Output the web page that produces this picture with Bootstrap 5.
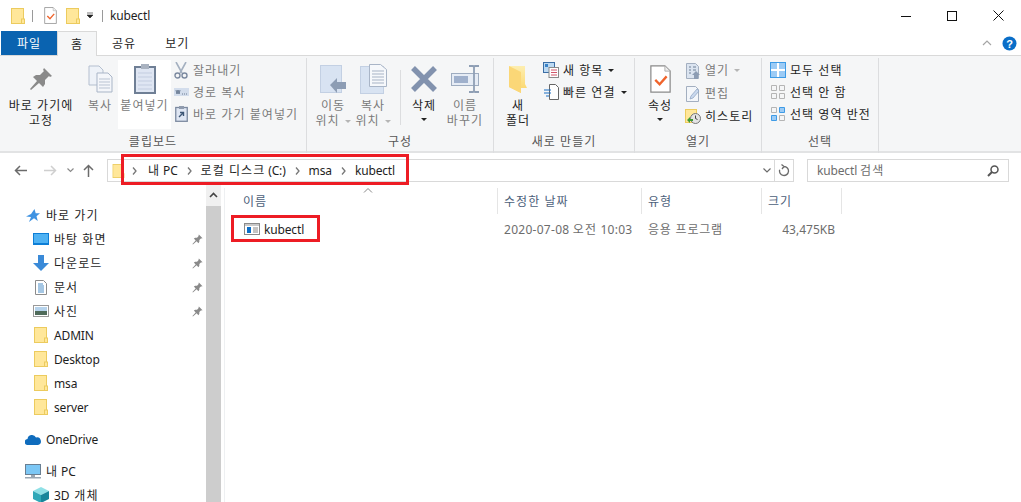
<!DOCTYPE html>
<html lang="ko"><head><meta charset="utf-8"><title>kubectl</title>
<link href="https://cdn.jsdelivr.net/npm/bootstrap@5.3.0/dist/css/bootstrap.min.css" rel="stylesheet">
<style>
html,body{height:502px;overflow:hidden;background:#fff}
body{position:relative;font-family:"Noto Sans","Noto Sans CJK KR",sans-serif;font-size:12px;line-height:15px;color:#1e1e1e;letter-spacing:-.15px}
svg{display:block;flex:none}
.ko{letter-spacing:1.05px}
.wpx-12{width:12px}.wpx-36{width:36px}.wpx-38{width:38px}.wpx-40{width:40px}.wpx-42{width:42px}.wpx-46{width:46px}.wpx-53{width:53px}.wpx-82{width:82px}.wpx-7{width:7px}.wpx-6{width:6px}
.wpx-307{width:307px}.wpx-187{width:187px}.wpx-141{width:141px}.wpx-127{width:127px}.wpx-117{width:117px}
.mln-2{margin-left:-2px}.mlp-6{margin-left:6px}.mlp-7{margin-left:7px}.mlp-8{margin-left:8px}.mlp-9{margin-left:9px}.mlp-10{margin-left:10px}.mlp-11{margin-left:11px}.mlp-14{margin-left:14px}.mlp-15{margin-left:15px}.mlp-17{margin-left:17px}.mlp-1{margin-left:1px}.mlp-2{margin-left:2px}.mlp-4{margin-left:4px}.mlp-29{margin-left:29px}
.titlebar{height:31px;padding-left:11px}
.tsep{width:1px;height:12px;background:#9a9a9a}
.winctl{width:46px;height:31px}
.tabrow{height:24px}
.tabfile{width:56px;height:24px;margin-left:1px;background:#0a63b0;color:#fff}
.tabhome{width:40px;height:25px;background:#f5f6f7;border:1px solid #d9d9d9;border-bottom:0;position:relative;z-index:1}
.tabplain{height:24px}
.rhelp{margin:0 4px 0 10px}
.ribbon{height:98px;background:#f5f6f7;border-top:1px solid #d9d9d9;border-bottom:2px solid #e2e3e4}
.rgroup{height:95px;border-right:1px solid #dcdddf;margin-top:2px;flex:none}
.rbody{height:74px;padding-top:2px}
.rlabel{height:15px;margin-top:2px;color:#555;text-align:center}
.bigbtn{height:69px;flex:none;text-align:center;white-space:nowrap}
.bigbtn .ico{height:38px}
.dis{color:#7a7a7a}
.smallcol{margin-top:-1px}
.smallrow{height:22px;white-space:nowrap}
.tallrows .smallrow{height:23px}
.smallrow .sico{width:18px;height:18px;margin-right:3px}
.sel-ico{margin-right:4px}
.selcol{padding-left:8px}
.pastebox{background:#fff}
.caretd{display:block;width:0;margin:5px auto 0;border-left:3px solid transparent;border-right:3px solid transparent;border-top:3px solid #222}
.caretin{display:inline-block;width:0;border-left:3px solid transparent;border-right:3px solid transparent;border-top:3px solid #222;vertical-align:middle;margin-left:5px}
.caretg{border-top-color:#b5b5b5}
.rsep{width:1px;height:55px;background:#dcdddf;margin-top:10px;margin-left:6px;flex:none}
.addrrow{height:30px;padding-top:6px}
.addrbox{height:23px;border:1px solid #d9d9d9;width:687px}
.navbtns{width:107px;height:23px}
.crumb{margin:0 9px}
.crumb1{margin-left:7px;margin-right:11px}
.addrdiv{width:1px;height:21px;background:#d9d9d9;margin:0 3px}
.refresh{margin-right:3px}
.searchbox{height:23px;width:202px;border:1px solid #d9d9d9;margin-left:13px;padding:0 9px;color:#6d6d6d}
.contentrow{height:320px}
.navpane{width:206px;padding-top:20px;flex:none}
.navrow{height:24px;white-space:nowrap}
.nico{width:18px;height:18px;margin-left:32px;margin-right:4px;flex:none}
.nico2{width:18px;height:18px;margin-left:24px;margin-right:4px;flex:none}
.navpin{margin-right:3px}
.navgap{height:8px}
.scrolltrack{width:15px;background:#cdcdcd;flex:none}
.scrolltop{height:23px;background:#f0f0f0}
.mainpane{margin-left:3px;border-left:1px solid #eef0f2;position:relative;flex:1;margin-top:5px}
.headrow{height:26px;color:#4c607a}
.hcell{height:26px;border-right:1px solid #e5e5e5;padding-left:6px;flex:none}
.cname{width:273px;padding-left:18px}.cdate{width:144px}.ctype{width:120px}.csize{width:80px}
.filerow{height:24px;margin-top:3px;color:#6d6d6d}
.filecell{flex:none;padding-left:6px}
.fname{width:273px;padding-left:19px;color:#1e1e1e}
.fico{margin-right:4px}
.fdate{letter-spacing:.28px}
.ftype{letter-spacing:.8px}
.fsize{width:73px;letter-spacing:0}
.redbox{position:absolute;border:3px solid #ed1c24;pointer-events:none}
.rb-addr{left:121px;top:154px;width:288px;height:31px}
.rb-file{left:231px;top:215px;width:89px;height:27px}
.sortcaret{position:absolute;left:138px;top:0}
</style></head><body>
<svg width="0" height="0" class="position-absolute">
<defs><linearGradient id="fg" x1="0" y1="0" x2="0" y2="1"><stop offset="0" stop-color="#fdeeb0"/><stop offset="1" stop-color="#fbd568"/></linearGradient></defs>
<symbol id="fld" viewBox="0 0 14 16"><rect x=".5" y=".5" width="12" height="15" fill="#ffe79a" stroke="#eccb5e"/><rect x="10.5" y="11" width="3" height="4.5" fill="#ffe79a" stroke="#eccb5e"/></symbol>
<symbol id="pin" viewBox="0 0 24 24"><path d="M15 1l8 8-2 1-1-1-4 4v4l-2 3-4-4-8 7-1-1 7-8-4-4 3-2h4l4-4-1-1z" fill="#8a8a8a"/></symbol>
<symbol id="doccheck" viewBox="0 0 24 32"><path d="M1 1h16l6 6v24H1z" fill="#fff" stroke="#8a8a8a" stroke-width="1.4"/><path d="M17 1v6h6" fill="#eee" stroke="#aaa"/><path d="M6 17l5 5 8-9" fill="none" stroke="#f0642c" stroke-width="2.6"/></symbol>
<symbol id="ckgrid" viewBox="0 0 16 16"><rect x=".5" y=".5" width="15" height="15" fill="#fff" stroke="#3e9be6"/><path d="M1 1h6v6H1zM9 1h6v6H9zM1 9h6v6H1zM9 9h6v6H9z" fill="#9ccbf5"/></symbol>
</svg>

<div class="titlebar d-flex align-items-center">
 <svg width="14" height="16"><use href="#fld"/></svg>
 <span class="tsep mlp-7"></span>
 <svg class="mlp-11" width="13" height="17"><use href="#doccheck"/></svg>
 <svg class="mlp-9" width="14" height="16"><use href="#fld"/></svg>
 <svg class="mlp-6" width="8" height="7" viewBox="0 0 8 7"><path d="M1 1h6M1 3h6l-3 3z" fill="#222" stroke="#222" stroke-width=".6"/></svg>
 <span class="tsep mlp-8"></span>
 <span class="mlp-7">kubectl</span>
 <div class="ms-auto d-flex">
  <div class="winctl d-flex align-items-center justify-content-center"><svg width="10" height="10"><path d="M0 5.500h10" stroke="#111"/></svg></div>
  <div class="winctl d-flex align-items-center justify-content-center"><svg width="10" height="10"><rect x=".5" y=".5" width="9" height="9" fill="none" stroke="#111"/></svg></div>
  <div class="winctl d-flex align-items-center justify-content-center"><svg width="11" height="11"><path d="M.5.500l10 10M10.500.500l-10 10" stroke="#111"/></svg></div>
 </div>
</div>

<div class="tabrow d-flex align-items-start">
 <div class="tabfile ko d-flex align-items-center justify-content-center">파일</div>
 <div class="tabhome ko d-flex align-items-center justify-content-center">홈</div>
 <div class="tabplain ko d-flex align-items-center mlp-15">공유</div>
 <div class="tabplain ko d-flex align-items-center mlp-29">보기</div>
 <div class="ms-auto d-flex align-items-center tabplain">
  <svg width="10" height="6"><path d="M1 5l4-4 4 4" fill="none" stroke="#a5a5a5" stroke-width="1.2"/></svg>
  <svg class="rhelp" width="15" height="15"><circle cx="7.5" cy="7.5" r="7" fill="#0a6ec8"/><text x="7.5" y="11.5" text-anchor="middle" font-size="11" font-weight="700" fill="#fff" font-family="Liberation Sans">?</text></svg>
 </div>
</div>

<div class="ribbon d-flex ko">
 <div class="rgroup wpx-307">
  <div class="rbody d-flex">
   <div class="bigbtn wpx-82"><div class="ico d-flex align-items-center justify-content-center"><svg width="24" height="24"><use href="#pin"/></svg></div>바로 가기에<br>고정</div>
   <div class="bigbtn dis wpx-36"><div class="ico d-flex align-items-center justify-content-center"><svg width="25" height="28" viewBox="0 0 25 28"><path d="M1 1h10l4 4v15H1z" fill="#eef2f8" stroke="#b4bfcf"/><path d="M9 8h11l4 4v15H9z" fill="#f4f6fa" stroke="#a9b5c7"/><path d="M11 14h11M11 17h11M11 20h11M11 23h11" stroke="#b9c3d2"/></svg></div>복사</div>
   <div class="bigbtn pastebox dis wpx-53"><div class="ico d-flex align-items-center justify-content-center"><svg width="22" height="30" viewBox="0 0 22 30"><rect x="1" y="3" width="20" height="26" fill="#dfe6f3" stroke="#6f7f95" stroke-width="2"/><rect x="7" y="0" width="8" height="5" fill="#a9b2c0"/><path d="M4 9h14M4 13h14M4 17h14M4 21h14M4 25h14" stroke="#c3cde0"/></svg></div>붙여넣기</div>
   <div class="smallcol dis mlp-1">
    <div class="smallrow d-flex align-items-center"><span class="sico d-flex align-items-center justify-content-center"><svg width="14" height="17" viewBox="0 0 14 17"><path d="M2 0l6 11M12 0L6 11" stroke="#a4b0c0" stroke-width="1.6"/><circle cx="3.5" cy="13.5" r="2.5" fill="none" stroke="#7c8aa0" stroke-width="1.4"/><circle cx="10.5" cy="13.5" r="2.5" fill="none" stroke="#7c8aa0" stroke-width="1.4"/></svg></span>잘라내기</div>
    <div class="smallrow d-flex align-items-center"><span class="sico d-flex align-items-center justify-content-center"><svg width="15" height="8"><rect width="15" height="8" fill="#d3ddec"/><path d="M2 2l1 4 1-4 1 4 1-4M8 6h1M10 6h1M12 6h1" stroke="#53667f" stroke-width=".8" fill="none"/></svg></span>경로 복사</div>
    <div class="smallrow d-flex align-items-center"><span class="sico d-flex align-items-center justify-content-center"><svg width="13" height="16" viewBox="0 0 13 16"><rect x=".75" y="1.5" width="11.5" height="13.8" fill="#dfe6f3" stroke="#7c8aa0" stroke-width="1.3"/><rect x="4" y="0" width="5" height="3" fill="#8f9bae"/><path d="M4 11l4-4M5 6.500h3.500V10" stroke="#3d5675" stroke-width="1.4" fill="none"/></svg></span>바로 가기 붙여넣기</div>
   </div>
  </div>
  <div class="rlabel">클립보드</div>
 </div>

 <div class="rgroup wpx-187">
  <div class="rbody d-flex">
   <div class="wpx-7"></div>
   <div class="bigbtn dis wpx-38"><div class="ico d-flex align-items-center justify-content-center"><svg width="27" height="28" viewBox="0 0 27 28"><rect x=".5" y=".5" width="21" height="27" fill="#d8e3f2" stroke="#c3d0e3"/><path d="M10 20l7-7v4h9v7h-9v4z" fill="#8d9db4"/></svg></div>이동<br>위치<span class="caretin caretg"></span></div>
   <div class="bigbtn dis wpx-42"><div class="ico d-flex align-items-center justify-content-center"><svg width="27" height="30" viewBox="0 0 27 30"><rect x=".5" y="2.500" width="23" height="27" fill="#d8e3f2" stroke="#c3d0e3"/><path d="M9.500.500h11l6 5v17h-17z" fill="#f6f8fb" stroke="#a9b5c7"/><path d="M12 7h12M12 10h12M12 13h12M12 16h12M12 19h12" stroke="#a7b3c5"/></svg></div>복사<br>위치<span class="caretin caretg"></span></div>
   <div class="rsep"></div>
   <div class="bigbtn wpx-46"><div class="ico d-flex align-items-center justify-content-center"><svg width="26" height="26"><path d="M2 2l22 22M24 2L2 24" stroke="#8292ae" stroke-width="5.500"/></svg></div>삭제<span class="caretd"></span></div>
   <div class="bigbtn dis wpx-40 mln-2"><div class="ico d-flex align-items-center justify-content-center"><svg width="29" height="28" viewBox="0 0 29 28"><rect x=".5" y="8.500" width="27" height="12" fill="#e6ecf5" stroke="#9eacc0"/><rect x="3" y="11" width="14" height="7" fill="#9fb0cc"/><path d="M18 1h4l1 1 1-1h4M23 2v24M18 27h4l1-1 1 1h4" stroke="#8f9fb5" stroke-width="1.800" fill="none"/></svg></div>이름<br>바꾸기</div>
  </div>
  <div class="rlabel">구성</div>
 </div>

 <div class="rgroup wpx-141">
  <div class="rbody d-flex">
   <div class="wpx-6"></div>
   <div class="bigbtn wpx-36"><div class="ico d-flex align-items-center justify-content-center"><svg width="18" height="27" viewBox="0 0 18 27"><path d="M0 0h16v18l2 4h-6v5L0 21z" fill="url(#fg)"/><path d="M0 0l12 6v21L0 21z" fill="#fbd777"/></svg></div>새<br>폴더</div>
   <div class="smallcol mlp-6">
    <div class="smallrow d-flex align-items-center"><span class="sico d-flex align-items-center justify-content-center"><svg width="16" height="16"><rect x=".5" y=".5" width="11" height="10" fill="#bcd9f2" stroke="#3b6ea5"/><rect x="2" y="2" width="3" height="3" fill="#3b83c7"/><rect x="6" y="5.500" width="9.500" height="10" fill="#fff" stroke="#8a8a8a"/><path d="M8 8h6M8 10.500h6M8 13h6" stroke="#d2566a"/></svg></span>새 항목<span class="caretin"></span></div>
    <div class="smallrow d-flex align-items-center"><span class="sico d-flex align-items-center justify-content-center"><svg width="15" height="16"><path d="M5.500.500h6l3 3v12h-9z" fill="#fff" stroke="#666"/><path d="M0 6h7M0 9h7M2 12h3" stroke="#1a6fc4" stroke-width="1.200"/></svg></span>빠른 연결<span class="caretin"></span></div>
   </div>
  </div>
  <div class="rlabel">새로 만들기</div>
 </div>

 <div class="rgroup wpx-127">
  <div class="rbody d-flex">
   <div class="wpx-7"></div>
   <div class="bigbtn wpx-36"><div class="ico d-flex align-items-center justify-content-center"><svg width="21" height="28"><use href="#doccheck"/></svg></div>속성<span class="caretd"></span></div>
   <div class="smallcol tallrows mlp-6">
    <div class="smallrow dis d-flex align-items-center"><span class="sico d-flex align-items-center justify-content-center"><svg width="14" height="16"><path d="M.5.500h9l3 3v12H.5z" fill="#dbe4f0" stroke="#a3afc0"/><path d="M3 4h2M3 7h2M3 10h2M7 4h3M7 7h3" stroke="#6f8096"/><path d="M10 8l4 4h-2v4H8v-4H6z" fill="#8d9db4"/></svg></span>열기<span class="caretin caretg"></span></div>
    <div class="smallrow dis d-flex align-items-center"><span class="sico d-flex align-items-center justify-content-center"><svg width="14" height="16"><path d="M.5.500h9l3 3v12H.5z" fill="#f3f6fa" stroke="#a3afc0"/><path d="M4 13l1-3 6-7 2 2-6 7z" fill="#c9d8ee" stroke="#8aa0c0" stroke-width=".7"/></svg></span>편집</div>
    <div class="smallrow d-flex align-items-center"><span class="sico d-flex align-items-center justify-content-center"><svg width="16" height="15"><rect x=".5" y=".5" width="11" height="13" fill="#ffe79a" stroke="#eccb5e"/><circle cx="10.500" cy="9.500" r="5" fill="#e4e4e4" stroke="#777"/><path d="M10.500 6.500v3l2 1" fill="none" stroke="#444"/><path d="M2 11l3-3v2h3v2H5v2z" fill="#3f9a35"/></svg></span>히스토리</div>
   </div>
  </div>
  <div class="rlabel">열기</div>
 </div>

 <div class="rgroup wpx-117">
  <div class="rbody"><div class="smallcol selcol">
   <div class="smallrow d-flex align-items-center"><svg class="sel-ico" width="16" height="16"><use href="#ckgrid"/></svg>모두 선택</div>
   <div class="smallrow d-flex align-items-center"><svg class="sel-ico" width="16" height="16"><path d="M1.500 1.500h5v5h-5zM9.500 1.500h5v5h-5zM1.500 9.500h5v5h-5zM9.500 9.500h5v5h-5z" fill="none" stroke="#b5b5b5"/></svg>선택 안 함</div>
   <div class="smallrow d-flex align-items-center"><svg class="sel-ico" width="16" height="16"><path d="M1.500 1.500h5v5h-5zM9.500 9.500h5v5h-5z" fill="none" stroke="#b5b5b5"/><path d="M9.500 1.500h5v5h-5zM1.500 9.500h5v5h-5z" fill="#9ccbf5" stroke="#3e9be6"/></svg>선택 영역 반전</div>
  </div></div>
  <div class="rlabel">선택</div>
 </div>
</div>

<div class="addrrow d-flex">
 <div class="navbtns d-flex align-items-center">
  <svg class="mlp-14" width="13" height="11"><path d="M13 5.500H2M6 1L1.500 5.500 6 10" fill="none" stroke="#6b6b6b" stroke-width="1.500"/></svg>
  <svg class="mlp-17" width="13" height="11"><path d="M0 5.500h11M7 1l4.500 4.500L7 10" fill="none" stroke="#cfcfcf" stroke-width="1.500"/></svg>
  <svg class="mlp-10" width="7" height="5"><path d="M.5.500L3.500 3.500 6.500.500" fill="none" stroke="#8a8a8a" stroke-width="1.200"/></svg>
  <svg class="mlp-9" width="11" height="13"><path d="M5.500 13V2M1 6l4.500-4.500L10 6" fill="none" stroke="#6b6b6b" stroke-width="1.500"/></svg>
 </div>
 <div class="addrbox d-flex align-items-center">
  <svg class="mlp-4" width="13" height="14" viewBox="0 0 14 16"><use href="#fld"/></svg>
  <svg class="crumb1" width="5" height="8"><path d="M1 .5l3 3.500-3 3.500" fill="none" stroke="#777" stroke-width="1.300"/></svg><span class="ko">내</span>&nbsp;PC
  <svg class="crumb" width="5" height="8"><path d="M1 .5l3 3.500-3 3.500" fill="none" stroke="#777" stroke-width="1.300"/></svg><span class="ko">로컬 디스크</span>&nbsp;(C:)
  <svg class="crumb" width="5" height="8"><path d="M1 .5l3 3.500-3 3.500" fill="none" stroke="#777" stroke-width="1.300"/></svg>msa
  <svg class="crumb" width="5" height="8"><path d="M1 .5l3 3.500-3 3.500" fill="none" stroke="#777" stroke-width="1.300"/></svg>kubectl
  <svg class="ms-auto" width="8" height="5"><path d="M.5.500L4 4 7.500.500" fill="none" stroke="#6b6b6b" stroke-width="1.200"/></svg>
  <span class="addrdiv"></span>
  <svg class="refresh" width="12" height="13" viewBox="0 0 12 13"><path d="M6 2.500a4.500 4.500 0 1 1-4.300 3.200M6 2.500L3.500.5M6 2.500l-2 2.500" fill="none" stroke="#6b6b6b" stroke-width="1.300"/></svg>
 </div>
 <div class="searchbox d-flex align-items-center">kubectl&nbsp;<span class="ko">검색</span><svg class="ms-auto" width="12" height="12"><circle cx="7.500" cy="4.500" r="3.500" fill="none" stroke="#555" stroke-width="1.500"/><path d="M5 7l-4 4" stroke="#555" stroke-width="2"/></svg></div>
</div>

<div class="contentrow d-flex">
 <div class="navpane">
  <div class="navrow ko d-flex align-items-center"><span class="nico2 d-flex align-items-center justify-content-center"><svg width="14" height="13" viewBox="0 0 14 13"><path d="M8.500 0l1.200 4.300H14l-3.500 2.900 1.300 4.800-3.800-2.700L3 13l2-5-5-.500 5-2.500z" fill="#3f93e2"/></svg></span>바로 가기</div>
  <div class="navrow ko d-flex align-items-center"><span class="nico d-flex align-items-center justify-content-center"><svg width="16" height="12"><rect width="16" height="12" fill="#0d7ed6"/><rect x="1" y="1" width="14" height="9" fill="#4fb2f3"/></svg></span>바탕 화면<svg class="ms-auto navpin" width="11" height="11"><use href="#pin"/></svg></div>
  <div class="navrow ko d-flex align-items-center"><span class="nico d-flex align-items-center justify-content-center"><svg width="16" height="16"><path d="M5 0h6v8h5l-8 8-8-8h5z" fill="#3a8ad8"/></svg></span>다운로드<svg class="ms-auto navpin" width="11" height="11"><use href="#pin"/></svg></div>
  <div class="navrow ko d-flex align-items-center"><span class="nico d-flex align-items-center justify-content-center"><svg width="12" height="15" viewBox="0 0 12 15"><path d="M.5.500h8l3 3v11H.5z" fill="#fff" stroke="#8c8c8c"/><path d="M3 4h5M3 6h6M3 8h6M3 10h6M3 12h6" stroke="#4d8fc9"/></svg></span>문서<svg class="ms-auto navpin" width="11" height="11"><use href="#pin"/></svg></div>
  <div class="navrow ko d-flex align-items-center"><span class="nico d-flex align-items-center justify-content-center"><svg width="16" height="12"><rect x=".5" y=".5" width="15" height="11" fill="#fff" stroke="#999"/><rect x="2" y="2" width="12" height="4" fill="#b6d3ec"/><rect x="2" y="6" width="12" height="4" fill="#4f6b5a"/></svg></span>사진<svg class="ms-auto navpin" width="11" height="11"><use href="#pin"/></svg></div>
  <div class="navrow d-flex align-items-center"><span class="nico d-flex align-items-center justify-content-center"><svg width="14" height="16"><use href="#fld"/></svg></span>ADMIN</div>
  <div class="navrow d-flex align-items-center"><span class="nico d-flex align-items-center justify-content-center"><svg width="14" height="16"><use href="#fld"/></svg></span>Desktop</div>
  <div class="navrow d-flex align-items-center"><span class="nico d-flex align-items-center justify-content-center"><svg width="14" height="16"><use href="#fld"/></svg></span>msa</div>
  <div class="navrow d-flex align-items-center"><span class="nico d-flex align-items-center justify-content-center"><svg width="14" height="16"><use href="#fld"/></svg></span>server</div>
  <div class="navgap"></div>
  <div class="navrow d-flex align-items-center"><span class="nico2 d-flex align-items-center justify-content-center"><svg width="16" height="11" viewBox="0 0 16 11"><path d="M3 11a3 3 0 0 1-.5-6A4.500 4.500 0 0 1 11 3.500 3.700 3.700 0 0 1 13 11z" fill="#0f6cbd"/></svg></span>OneDrive</div>
  <div class="navgap"></div>
  <div class="navrow d-flex align-items-center"><span class="nico2 d-flex align-items-center justify-content-center"><svg width="16" height="15"><rect x=".5" y=".5" width="15" height="10" fill="#7cc7f5" stroke="#6a7f92"/><rect x="6" y="11" width="4" height="2" fill="#9aa7b3"/><rect y="13" width="16" height="1.500" fill="#9aa7b3"/></svg></span><span class="ko">내</span>&nbsp;PC</div>
  <div class="navrow d-flex align-items-center"><span class="nico d-flex align-items-center justify-content-center"><svg width="16" height="16"><path d="M8 0l8 4-8 4-8-4z" fill="#8fe0e6"/><path d="M0 4l8 4v8l-8-4z" fill="#2fa8b8"/><path d="M16 4l-8 4v8l8-4z" fill="#19869b"/></svg></span>3D&nbsp;<span class="ko mlp-2">개체</span></div>
 </div>
 <div class="scrolltrack"><div class="scrolltop d-flex align-items-center justify-content-center"><svg width="9" height="6"><path d="M1 5l3.500-3.500L8 5" fill="none" stroke="#444" stroke-width="1.600"/></svg></div></div>
 <div class="mainpane">
  <svg class="sortcaret" width="10" height="5"><path d="M1 4.500l4-4 4 4" fill="none" stroke="#888"/></svg>
  <div class="headrow ko d-flex align-items-center">
   <div class="hcell cname d-flex align-items-center">이름</div>
   <div class="hcell cdate d-flex align-items-center">수정한 날짜</div>
   <div class="hcell ctype d-flex align-items-center">유형</div>
   <div class="hcell csize d-flex align-items-center">크기</div>
  </div>
  <div class="filerow d-flex align-items-center">
   <div class="filecell fname d-flex align-items-center"><svg class="fico" width="16" height="12"><rect x=".5" y=".5" width="15" height="11" fill="#fff" stroke="#8a8a8a"/><rect x="1" y="1" width="14" height="2" fill="#c9c9c9"/><rect x="3" y="4" width="4" height="6" fill="#0a6ec8"/><path d="M9 5h5M9 7h5M9 9h5" stroke="#888"/></svg>kubectl</div>
   <div class="filecell cdate fdate">2020-07-08 <span class="ko">오전</span> 10:03</div>
   <div class="filecell ctype ftype">응용 프로그램</div>
   <div class="filecell fsize text-end">43,475KB</div>
  </div>
 </div>
</div>
<div class="redbox rb-addr"></div>
<div class="redbox rb-file"></div>
</body></html>
